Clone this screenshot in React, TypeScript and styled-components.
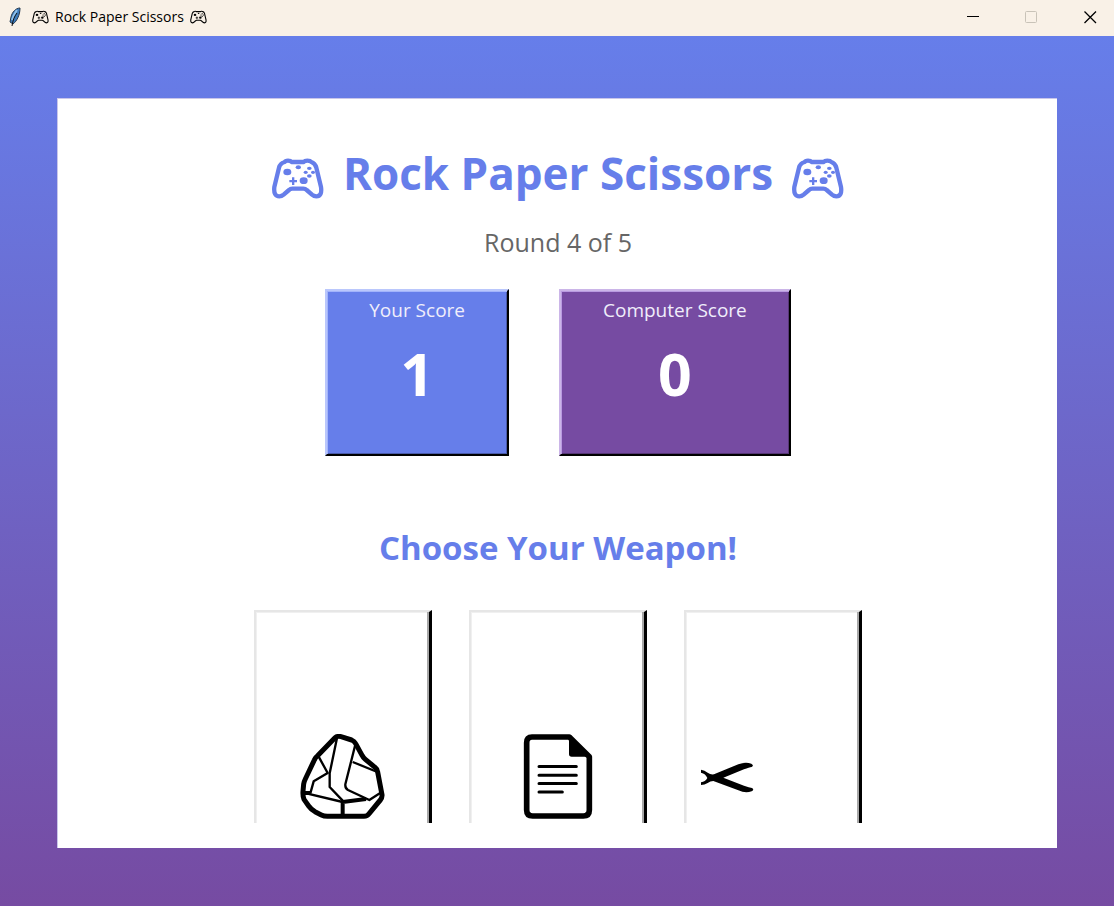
import React from "react";
import styled, { createGlobalStyle } from "styled-components";

const GlobalStyle = createGlobalStyle`
  *, *::before, *::after { box-sizing: border-box; }
  body { margin: 0; font-family: "Open Sans", "Noto Sans", sans-serif; }
  h1, h2, p { margin: 0; }
`;

const Window = styled.div`
  display: flex;
  flex-direction: column;
  min-height: 100vh;
`;

const TitleBar = styled.header`
  display: flex;
  align-items: center;
  height: 36px;
  padding: 0 17px 2px 8px;
  background: #f9f1e7;
  color: #000;
`;

const Caption = styled.div`
  display: flex;
  align-items: center;
  gap: 6px;
  margin-left: 11px;
  font-size: 14px;
  line-height: 20px;
`;

const Controls = styled.div`
  display: flex;
  gap: 46px;
  margin-left: auto;
`;

const ControlButton = styled.button`
  display: flex;
  width: 13px;
  height: 13px;
  padding: 0;
  border: 0;
  background: none;
  color: #000;

  &:disabled { color: #c9c3b8; }
`;

const Backdrop = styled.main`
  display: flex;
  flex: 1;
  padding: 62px 57px 58px;
  background: linear-gradient(#667eea, #764ba2);
`;

const Panel = styled.div`
  display: flex;
  flex: 1;
  flex-direction: column;
  align-items: center;
  padding: 45px 24px 25px 26px;
  background: #fff;
  box-shadow: inset 1px 1px #c9c6ea;
`;

const Title = styled.h1`
  display: flex;
  align-items: center;
  gap: 19px;
  color: #667eea;
  font-size: 44px;
  font-weight: 700;
  line-height: 60px;
  white-space: nowrap;

  svg { margin-top: 10px; }
`;

const Round = styled.p`
  margin-top: 21px;
  color: #666;
  font-size: 25px;
  line-height: 36px;
`;

const Scores = styled.section`
  display: flex;
  gap: 50px;
  margin-top: 29px;
`;

const ScoreCard = styled.div<{ $fill: string; $light: string; $glow: string; $shade: string }>`
  display: flex;
  flex-direction: column;
  align-items: center;
  height: 167px;
  padding: 6px 42px;
  border: 2px solid #000;
  border-top-color: ${(p) => p.$light};
  border-left-color: ${(p) => p.$light};
  background: ${(p) => p.$fill};
  box-shadow: inset 1px 1px ${(p) => p.$glow}, inset -1px -1px ${(p) => p.$shade};
`;

const ScoreLabel = styled.span`
  color: #f0eefb;
  font-size: 19px;
  line-height: 26px;
`;

const ScoreValue = styled.strong`
  margin-top: 10px;
  color: #fff;
  font-size: 59px;
  font-weight: 700;
  line-height: 80px;
`;

const Prompt = styled.h2`
  margin-top: 70px;
  color: #667eea;
  font-size: 33px;
  font-weight: 700;
  line-height: 44px;
`;

const Weapons = styled.div`
  display: flex;
  flex: 1;
  gap: 37px;
  min-height: 213px;
  margin-top: 40px;
`;

const WeaponButton = styled.button`
  display: flex;
  align-items: flex-start;
  justify-content: center;
  width: 178px;
  padding: 122px 0 0;
  border: 2px solid #e6e6e6;
  border-right: 3px solid #000;
  border-bottom: 0;
  background: #fff;
  box-shadow: inset -2px 0 #a8a8a8, inset 1px 1px #f0f0f0;
  color: #000;
`;

const Gamepad = ({ width, height, line }: { width: number; height: number; line: number }) => (
  <svg width={width} height={height} viewBox="39 53 156 123" fill="none" aria-hidden="true">
    <path
      d="M77 65 Q79 61 87 61 Q95 61 98 65 H134 Q137 61 145 61 Q154 61 157 65 Q168 68 172 82 L186 140 Q190 168 172 168 Q165 168 159 163 L143 149 Q139 145 133 145 H100 Q94 145 90 149 L74 163 Q68 168 61 168 Q43 168 46 140 L60 82 Q64 68 77 65 Z"
      stroke="currentColor"
      strokeWidth={line}
      strokeLinejoin="round"
    />
    <g fill="currentColor">
      <ellipse cx="85" cy="95" rx="12" ry="10" />
      <ellipse cx="134" cy="121" rx="12" ry="10" />
      <ellipse cx="118" cy="81" rx="8" ry="6" />
      <ellipse cx="151" cy="84" rx="7" ry="5" />
      <ellipse cx="140" cy="96" rx="6" ry="5" />
      <ellipse cx="162" cy="96" rx="6" ry="5" />
      <ellipse cx="151" cy="107" rx="7" ry="5" />
      <path d="M99 111h7v8h8v7h-8v8h-7v-8h-8v-7h8z" />
    </g>
  </svg>
);

const Feather = () => (
  <svg width="13" height="20" viewBox="0 0 13 20" aria-hidden="true">
    <path d="M12 1 C8 1 4 5 3 10 L2 15 L5 17 C9 14 12 8 12 1Z" fill="#3d7cbd" stroke="#26384c" />
    <path d="M9 3 C7 6 5 9 4 13" fill="none" stroke="#8fc0ea" strokeWidth="2" />
    <path d="M9 6 C6 10 5 13 4 19" fill="none" stroke="#111" />
  </svg>
);

const Rock = () => (
  <svg width="86" height="86" viewBox="180 402 258 258" fill="none" stroke="#000" strokeLinejoin="round" aria-hidden="true">
    <path
      d="M285 413 Q293 407 303 410 L335 420 Q343 423 347 431 L365 464 Q369 472 376 478 L405 502 Q412 507 413 516 L426 584 Q427 593 421 600 L388 640 Q382 649 372 649 H262 Q252 649 244 645 L225 635 Q213 628 206 618 L192 598 Q188 588 189 574 L191 552 Q192 545 196 537 L223 480 Q226 472 232 468 Z"
      strokeWidth="15"
    />
    <g strokeWidth="7">
      <path d="M291 414 L269 520 V561 L308 602" />
      <path d="M347 430 L316 553 Q315 565 324 570 L388 600 L424 577" />
      <path d="M338 486 L412 516" />
      <path d="M236 470 L263 519 L221 544 L211 580" />
      <path d="M190 578 L308 606" />
    </g>
    <path d="M190 579 H212 M308 650 V606 L378 597" strokeWidth="12" />
  </svg>
);

const Paper = () => (
  <svg width="86" height="86" viewBox="164 402 258 258" fill="none" stroke="#000" aria-hidden="true">
    <path d="M215 411 H327 L387 470 V630 Q387 648 369 648 H217 Q199 648 199 630 V428 Q199 411 215 411Z" strokeWidth="17" strokeLinejoin="round" />
    <path d="M326 408 L392 470 H334 Q326 470 326 462Z" fill="#000" stroke="none" />
    <path d="M236 499.500H348 M236 525.500H348 M236 550.500H348 M236 576H306" strokeWidth="9" strokeLinecap="round" />
  </svg>
);

const Scissors = () => (
  <svg width="144" height="86" viewBox="93 402 432 258" aria-hidden="true">
    <path
      d="M93 509 Q104 511 113 518 Q122 525 132 523 L205 493 Q226 485 244 491 Q253 496 245 501 Q238 502 222 508 L160 533 L222 557 Q238 563 246 564 Q254 569 245 574 Q226 581 205 571 L130 543 Q121 543 113 549 Q104 555 93 555 V547 Q106 545 112 534 Q107 521 93 518Z"
      fill="#000"
    />
  </svg>
);

export default function App() {
  return (
    <Window>
      <GlobalStyle />
      <TitleBar>
        <Feather />
        <Caption>
          <Gamepad width={17} height={14} line={10} />
          <span>Rock Paper Scissors</span>
          <Gamepad width={17} height={14} line={10} />
        </Caption>
        <Controls>
          <ControlButton aria-label="Minimize">
            <svg width="13" height="13" viewBox="0 0 13 13" aria-hidden="true">
              <path d="M1 5.500H13" stroke="currentColor" />
            </svg>
          </ControlButton>
          <ControlButton aria-label="Maximize" disabled>
            <svg width="13" height="13" viewBox="0 0 13 13" aria-hidden="true">
              <rect x="0.500" y="0.500" width="11" height="11" rx="1" fill="none" stroke="currentColor" />
            </svg>
          </ControlButton>
          <ControlButton aria-label="Close">
            <svg width="13" height="13" viewBox="0 0 13 13" aria-hidden="true">
              <path d="M0.500 0.500L12 12M12 0.500L0.500 12" stroke="currentColor" strokeWidth="1.300" />
            </svg>
          </ControlButton>
        </Controls>
      </TitleBar>
      <Backdrop>
        <Panel>
          <Title>
            <Gamepad width={52} height={41} line={13} />
            <span>Rock Paper Scissors</span>
            <Gamepad width={52} height={41} line={13} />
          </Title>
          <Round>Round 4 of 5</Round>
          <Scores>
            <ScoreCard $fill="#667eea" $light="#bac7fc" $glow="#a3b4fb" $shade="#4a5ba9">
              <ScoreLabel>Your Score</ScoreLabel>
              <ScoreValue>1</ScoreValue>
            </ScoreCard>
            <ScoreCard $fill="#764ba2" $light="#cbb5e8" $glow="#b99be0" $shade="#553675">
              <ScoreLabel>Computer Score</ScoreLabel>
              <ScoreValue>0</ScoreValue>
            </ScoreCard>
          </Scores>
          <Prompt>Choose Your Weapon!</Prompt>
          <Weapons>
            <WeaponButton aria-label="Rock"><Rock /></WeaponButton>
            <WeaponButton aria-label="Paper"><Paper /></WeaponButton>
            <WeaponButton aria-label="Scissors"><Scissors /></WeaponButton>
          </Weapons>
        </Panel>
      </Backdrop>
    </Window>
  );
}
